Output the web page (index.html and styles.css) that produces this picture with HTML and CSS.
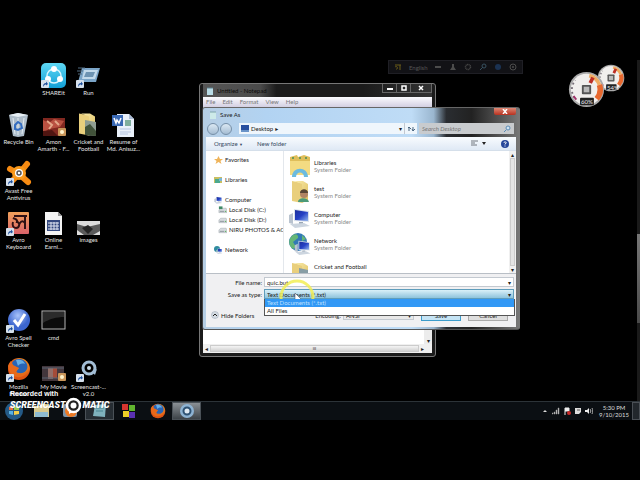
FILE: index.html
```html
<!DOCTYPE html>
<html lang="en">
<head>
    <meta charset="UTF-8">
    <meta name="viewport" content="width=device-width, initial-scale=1.0">
    <title>Save As - Desktop</title>
    <link rel="stylesheet" href="styles.css">
</head>
<body>
    <!-- shared shapes -->
    <svg class="defs" width="0" height="0" aria-hidden="true">
        <defs>
            <linearGradient id="gFolder" x1="0" y1="0" x2="1" y2="1"><stop offset="0" stop-color="#fbeeb0"/><stop offset="1" stop-color="#dcbb58"/></linearGradient>
            <linearGradient id="gShare" x1="0" y1="0" x2="0" y2="1"><stop offset="0" stop-color="#5fd9f5"/><stop offset="1" stop-color="#129fd6"/></linearGradient>
            <linearGradient id="gAvro" x1="0" y1="0" x2="0" y2="1"><stop offset="0" stop-color="#f0a05a"/><stop offset="1" stop-color="#d9626a"/></linearGradient>
            <radialGradient id="gSpell" cx=".45" cy=".3"><stop offset="0" stop-color="#a9c4fa"/><stop offset="1" stop-color="#3c66cf"/></radialGradient>
            <radialGradient id="gFire" cx=".6" cy=".35"><stop offset="0" stop-color="#ffc933"/><stop offset="1" stop-color="#dd5312"/></radialGradient>
            <linearGradient id="gScreen" x1="0" y1="0" x2="1" y2="1"><stop offset="0" stop-color="#1c2f9c"/><stop offset=".5" stop-color="#2440c4"/><stop offset="1" stop-color="#8fb4ee"/></linearGradient>
            <symbol id="shortcut" viewBox="0 0 8 8"><rect width="8" height="8" rx="1" fill="#d5e0ec"/><path d="M2 7C2 4 3 3 5 3V1.500L7 4 5 5.500V4.500C4 4.500 3 5 2 7Z" fill="#1d4f9c"/></symbol>
            <symbol id="folder" viewBox="0 0 20 24"><path d="M2 1L12 3V23L2 21Z" fill="#e9cf7c"/><path d="M4 1H13L18 4V20L12 23V4Z" fill="url(#gFolder)"/></symbol>
            <symbol id="computer" viewBox="0 0 24 20"><path d="M1 7L5 5V16L1 15Z" fill="#b9c3cf"/><path d="M6 1L21 3V14L6 13Z" fill="#dbe3ec"/><path d="M7 2L20 4V13L7 12Z" fill="url(#gScreen)"/><path d="M11 14H15V16H11Z" fill="#9aa7b5"/><path d="M2 16L16 15L22 18L7 20Z" fill="#ccd5df"/></symbol>
            <symbol id="fox" viewBox="0 0 24 24"><circle cx="12" cy="12" r="11" fill="url(#gFire)"/><path d="M5 6C7 1 17 0 20 7C22 13 17 17 12 16C7 16 10 12 12 11C9 11 5 10 5 6Z" fill="#2964b5"/><path d="M9 3C13 2 17 3 18 7C15 6 12 7 11 9Z" fill="#65aee5"/><path d="M1 9C2 6 3 5 4 4L6 8L12 11L9 15C11 18 17 18 20 14C18 22 3 24 1 9Z" fill="#e8691a"/></symbol>
            <symbol id="drive" viewBox="0 0 10 8"><path d="M1 4L3 2H9L10 4V7H1Z" fill="#d6dade" stroke="#98a0a8" stroke-width=".5"/><path d="M2 5.500H7" stroke="#8b939b"/><circle cx="8.500" cy="5.500" r=".7" fill="#4bb14b"/></symbol>
            <symbol id="dial" viewBox="0 0 40 40"><circle cx="20" cy="20" r="19" fill="#aaa"/><circle cx="20" cy="20" r="17" fill="#f1efed"/><path d="M7 29A15.500 15.500 0 0 1 8 10" fill="none" stroke="#776f78" stroke-width="2" stroke-dasharray="2 3"/><path d="M6 27L9 31" stroke="#a2306a" stroke-width="2"/><path d="M23 5A15.500 15.500 0 0 1 34 15" fill="none" stroke="#f0ac62" stroke-width="4"/><path d="M34 15A15.500 15.500 0 0 1 31 30" fill="none" stroke="#e8692f" stroke-width="6"/><path d="M27 7L24 13" stroke="#bd2f26" stroke-width="4"/><rect x="15" y="15" width="10" height="10" rx="1" fill="#555"/><rect x="17" y="17" width="6" height="6" fill="#b9b9b9"/><rect x="13" y="29" width="15" height="8" rx="1" fill="#222"/></symbol>
        </defs>
    </svg>

    <main class="screen">
        <div class="desktop">
            <div class="icons">
                <a class="icon c2 r1" href="#">
                    <svg width="27" height="27" viewBox="0 0 27 27"><rect x="1" y="1" width="25" height="25" rx="5" fill="url(#gShare)"/><circle cx="14" cy="14" r="7" fill="none" stroke="#d9f6ff" stroke-width="1.500"/><circle cx="14" cy="7" r="3" fill="#fff"/><circle cx="8" cy="17" r="3" fill="#fff"/><circle cx="20" cy="17" r="3" fill="#fff"/><use href="#shortcut" x="1" y="18" width="8" height="8"/></svg>
                    <span>SHAREit</span>
                </a>
                <a class="icon c3 r1" href="#">
                    <svg width="27" height="27" viewBox="0 0 27 27"><path d="M7 6H25L21 20H3Z" fill="#7ba5c8"/><path d="M9 8H23L20 17H7Z" fill="#c2d9ea"/><path d="M11 10H20L18 15H9Z" fill="#6d93b2"/><path d="M3 6H10M2 9H8M3 12H7" stroke="#526d82"/><use href="#shortcut" x="1" y="18" width="8" height="8"/></svg>
                    <span>Run</span>
                </a>
                <a class="icon c1 r2" href="#">
                    <svg width="27" height="27" viewBox="0 0 27 27"><path d="M4 4L13 2L23 4L19 25L13 26L8 25Z" fill="#aebdca"/><path d="M4 4L13 2L23 4L13 6Z" fill="#e8f0f5"/><path d="M8 7L10 23M13 7V24M19 7L17 23" stroke="#e4ecf2"/><path d="M10 14L13 11L16 13L17 17L13 19L10 18Z" fill="none" stroke="#346dc0" stroke-width="2"/></svg>
                    <span>Recycle Bin</span>
                </a>
                <a class="icon c2 r2" href="#">
                    <svg width="27" height="27" viewBox="0 0 27 27"><rect x="3" y="7" width="22" height="18" fill="#812820"/><path d="M3 9L9 12L14 8L24 10L20 16L9 18L3 22Z" fill="#b95141"/><path d="M7 10L12 14L9 18M15 10L19 14" stroke="#e3a789" stroke-width="2" fill="none"/><path d="M3 20L12 19L18 25H3Z" fill="#4f1511"/><rect x="18" y="17" width="8" height="8" rx="1" fill="#c9965a"/><circle cx="22" cy="21" r="2" fill="#fff3cc"/></svg>
                    <span>Amon Amarth - F...</span>
                </a>
                <a class="icon c3 r2" href="#">
                    <svg width="27" height="27" viewBox="0 0 27 27"><use href="#folder" x="2" y="1" width="20" height="25"/><path d="M10 9L21 11V25L10 24Z" fill="#8e9c91"/><path d="M10 16L15 13L21 20V25L10 24Z" fill="#41523a"/></svg>
                    <span>Cricket and Football</span>
                </a>
                <a class="icon c4 r2" href="#">
                    <svg width="27" height="27" viewBox="0 0 27 27"><path d="M7 3H19L24 8V26H7Z" fill="#e9f0fa"/><path d="M19 3V8H24Z" fill="#aabbd5"/><path d="M10 18H21M10 21H21M10 23H18" stroke="#b5c4df"/><rect x="2" y="4" width="11" height="11" fill="#3868b4"/><path d="M4 7L6 12L7 9L9 12L11 7" fill="none" stroke="#fff" stroke-width="1.500"/><rect x="15" y="9" width="6" height="6" fill="#7fae9d"/></svg>
                    <span>Resume of Md. Anisuz...</span>
                </a>
                <a class="icon c1 r3" href="#">
                    <svg width="27" height="27" viewBox="0 0 27 27"><path d="M14 14L22 4M14 14L5 9M14 14L23 22M14 14L7 21" stroke="#f78b12" stroke-width="6" stroke-linecap="round"/><circle cx="14" cy="13" r="7" fill="#f99a1c"/><circle cx="14" cy="13" r="4" fill="#fff"/><circle cx="14" cy="13" r="2" fill="none" stroke="#555" stroke-width="1.500"/><use href="#shortcut" x="1" y="18" width="8" height="8"/></svg>
                    <span>Avast Free Antivirus</span>
                </a>
                <a class="icon c1 r4" href="#">
                    <svg width="27" height="27" viewBox="0 0 27 27"><rect x="3" y="3" width="21" height="22" rx="1" fill="url(#gAvro)"/><path d="M9 7H22M20 7V20M8 9C10 10 13 10 12 13C15 13 15 19 11 19C8 19 7 16 8 13M14 16C16 11 18 12 20 14" fill="none" stroke="#2e1013" stroke-width="2"/><use href="#shortcut" x="1" y="19" width="8" height="8"/></svg>
                    <span>Avro Keyboard</span>
                </a>
                <a class="icon c2 r4" href="#">
                    <svg width="27" height="27" viewBox="0 0 27 27"><path d="M5 3H18L22 7V26H5Z" fill="#f4f4f4"/><path d="M18 3V7H22Z" fill="#999"/><rect x="7" y="11" width="13" height="11" fill="#34497f"/><path d="M8 14H19M8 17H19M8 20H19M11 13V21M14 13V21M17 13V21" stroke="#dfe5f2"/></svg>
                    <span>Online Earni...</span>
                </a>
                <a class="icon c3 r4" href="#">
                    <svg width="27" height="27" viewBox="0 0 27 27"><rect x="2" y="12" width="23" height="14" fill="#dcdcdc"/><path d="M2 15L12 18L25 15V22L18 26H9L2 21Z" fill="#5b5b5b"/><path d="M7 19L13 16L18 20L13 25Z" fill="#262626"/></svg>
                    <span>images</span>
                </a>
                <a class="icon c1 r6" href="#">
                    <svg width="27" height="27" viewBox="0 0 27 27"><circle cx="14" cy="13" r="11" fill="url(#gSpell)"/><path d="M9 13L13 18L20 7" fill="none" stroke="#fff" stroke-width="3"/><use href="#shortcut" x="1" y="18" width="8" height="8"/></svg>
                    <span>Avro Spell Checker</span>
                </a>
                <a class="icon c2 r6" href="#">
                    <svg width="27" height="27" viewBox="0 0 27 27"><rect x="2" y="4" width="23" height="18" fill="#0b0b0b" stroke="#b5b5b5"/><path d="M3 5H24V10C17 10 9 12 3 16Z" fill="#2b2b2b"/></svg>
                    <span>cmd</span>
                </a>
                <a class="icon c1 r7" href="#">
                    <svg width="27" height="27" viewBox="0 0 27 27"><use href="#fox" x="2" y="1" width="24" height="24"/><use href="#shortcut" x="1" y="18" width="8" height="8"/></svg>
                    <span>Mozilla Firefox</span>
                </a>
                <a class="icon c2 r7" href="#">
                    <svg width="27" height="27" viewBox="0 0 27 27"><rect x="2" y="10" width="22" height="15" fill="#42363c"/><rect x="8" y="12" width="5" height="11" fill="#916e68"/><rect x="13" y="12" width="4" height="10" fill="#a34b38"/><path d="M2 12H24M2 22H18" stroke="#596271"/><rect x="18" y="17" width="8" height="8" rx="1" fill="#c9965a"/><circle cx="22" cy="21" r="2" fill="#fff3cc"/></svg>
                    <span>My Movie</span>
                </a>
                <a class="icon c3 r7" href="#">
                    <svg width="27" height="27" viewBox="0 0 27 27"><circle cx="14" cy="12" r="6" fill="none" stroke="#a3bed6" stroke-width="3"/><circle cx="14" cy="12" r="2" fill="#c9dbe8"/><path d="M17 16L22 13L20 19Z" fill="#a3bed6"/><use href="#shortcut" x="1" y="18" width="8" height="8"/></svg>
                    <span>Screencast-... v2.0</span>
                </a>
            </div>

            <div class="langbar">
                <svg width="8" height="8" viewBox="0 0 8 8"><path d="M1 2H7M6 2V7M1 4C4 2 4 7 2 6" fill="none" stroke="#6b5d18"/></svg>
                <span>English</span>
                <svg width="8" height="8" viewBox="0 0 8 8"><rect x="1" y="3" width="6" height="2" fill="#4c4c4c"/></svg>
                <svg width="8" height="8" viewBox="0 0 8 8"><path d="M3 1H5V4L7 7H1L3 4Z" fill="#4c4c4c"/></svg>
                <svg width="8" height="8" viewBox="0 0 8 8"><circle cx="4" cy="4" r="2.500" fill="none" stroke="#444" stroke-dasharray="1 .5" stroke-width="1.500"/></svg>
                <svg width="8" height="8" viewBox="0 0 8 8"><circle cx="5" cy="3" r="2" fill="none" stroke="#37505f"/><path d="M4 4L1 7" stroke="#37505f"/></svg>
                <svg width="8" height="8" viewBox="0 0 8 8"><circle cx="4" cy="4" r="3" fill="#1b3252"/></svg>
                <svg width="8" height="8" viewBox="0 0 8 8"><circle cx="4" cy="4" r="3" fill="none" stroke="#4c4c4c"/><circle cx="4" cy="4" r="1" fill="#4c4c4c"/></svg>
            </div>

            <svg class="gauges" width="60" height="46" viewBox="0 0 60 46">
                <use href="#dial" x="30" y="0" width="28" height="28"/>
                <use href="#dial" x="1" y="7" width="37" height="37"/>
                <text x="14" y="40">60%</text>
                <text x="40" y="26">54%</text>
            </svg>

            <section class="window notepad" aria-label="Untitled - Notepad">
                <header class="titlebar">
                    <svg width="8" height="8" viewBox="0 0 8 8"><rect x="1" y="1" width="6" height="7" fill="#b9dce6"/><path d="M1 1H7" stroke="#5f7e8b"/></svg>
                    <h2>Untitled - Notepad</h2>
                    <div class="controls">
                        <button aria-label="Minimize"><svg width="8" height="6" viewBox="0 0 8 6"><path d="M1 4H7" stroke="#fff" stroke-width="2"/></svg></button>
                        <button aria-label="Maximize"><svg width="8" height="6" viewBox="0 0 8 6"><rect x="2" y="1" width="4" height="4" fill="none" stroke="#fff" stroke-width="1.500"/></svg></button>
                        <button class="wide" aria-label="Close"><svg width="8" height="6" viewBox="0 0 8 6"><path d="M2 1L6 5M6 1L2 5" stroke="#fff" stroke-width="1.500"/></svg></button>
                    </div>
                </header>
                <nav class="menu"><span>File</span><span>Edit</span><span>Format</span><span>View</span><span>Help</span></nav>
                <div class="page"><div class="vbar">▾</div></div>
                <div class="hbar"><span>◂</span><i>III</i><span>▸</span></div>
            </section>

            <form class="window dialog" aria-label="Save As" onsubmit="return false">
                <header class="titlebar">
                    <svg width="8" height="8" viewBox="0 0 8 8"><rect x="1" y="1" width="6" height="7" fill="#cdeae9"/><path d="M1 1H7" stroke="#7ea3ac"/></svg>
                    <h2>Save As</h2>
                    <button class="close" aria-label="Close"><svg width="8" height="5" viewBox="0 0 8 5"><path d="M2 0L6 5M6 0L2 5" stroke="#fff" stroke-width="1.500"/></svg></button>
                </header>
                <div class="address">
                    <button class="round" aria-label="Back"></button>
                    <button class="round" aria-label="Forward"></button>
                    <div class="path">
                        <svg width="8" height="7" viewBox="0 0 8 7"><rect width="8" height="6" fill="#2950a0"/><rect y="5" width="8" height="2" fill="#6a94c8"/></svg>
                        <span>Desktop</span><b>▸</b><em>▾</em>
                    </div>
                    <button class="refresh" aria-label="Refresh"><svg width="9" height="8" viewBox="0 0 9 8"><path d="M2 6V2M1 3L2 2L4 4M6 2V6M5 4L6 6L8 4" stroke="#4b6680" fill="none"/></svg></button>
                    <div class="search">
                        <input type="text" placeholder="Search Desktop" aria-label="Search Desktop">
                        <svg width="8" height="8" viewBox="0 0 8 8"><circle cx="5" cy="3" r="2" fill="#cfe3f3" stroke="#5a8bb5"/><path d="M3 5L1 7" stroke="#5a8bb5"/></svg>
                    </div>
                </div>
                <div class="toolbar">
                    <button>Organize <small>▼</small></button>
                    <button>New folder</button>
                    <button class="views" aria-label="Change your view"><svg width="16" height="7" viewBox="0 0 16 7"><path d="M0 1H7M0 3H4M0 5H6" stroke="#70777f"/><path d="M11 2H15L13 5Z" fill="#222"/></svg></button>
                    <button aria-label="Help"><svg width="8" height="8" viewBox="0 0 8 8"><circle cx="4" cy="4" r="4" fill="#27479a"/><path d="M3 3C3 1 6 2 5 3L4 4.500M4 5.500V6.500" stroke="#fff" fill="none"/></svg></button>
                </div>
                <div class="browser">
                    <ul class="tree">
                        <li><svg width="9" height="8" viewBox="0 0 9 8"><path d="M4.500 0L6 3H9L6.500 5L7.500 8L4.500 6L1.500 8L2.500 5L0 3H3Z" fill="#efb45a"/></svg>Favorites</li>
                        <li><svg width="9" height="8" viewBox="0 0 9 8"><rect y="1" width="8" height="6" fill="#c9bf62"/><rect x="1" y="3" width="5" height="4" fill="#4ba98e"/><rect x="5" y="2" width="3" height="3" fill="#7cb6d8"/></svg>Libraries</li>
                        <li><svg width="9" height="8"><use href="#computer" width="9" height="8"/></svg>Computer
                            <ul>
                                <li><svg width="9" height="8" viewBox="0 0 10 8"><use href="#drive" width="10" height="8"/><path d="M1 0H5V3H1Z" fill="#3f8a67"/></svg>Local Disk (C:)</li>
                                <li><svg width="9" height="8"><use href="#drive" width="9" height="8"/></svg>Local Disk (D:)</li>
                                <li><svg width="9" height="8"><use href="#drive" width="9" height="8"/></svg>NIRU PHOTOS &amp; AC</li>
                            </ul>
                        </li>
                        <li><svg width="9" height="8" viewBox="0 0 9 8"><circle cx="3" cy="3" r="3" fill="#2f8c9f"/><use href="#computer" x="2" y="2" width="7" height="6"/></svg>Network</li>
                    </ul>
                    <ul class="files">
                        <li>
                            <svg width="24" height="24" viewBox="0 0 24 24"><path d="M2 3L9 1L10 3L16 1L22 3V20H2Z" fill="#dfbe5a"/><path d="M2 7H22V21H2Z" fill="#f3db82"/><path d="M5 3V5M12 3V5M18 3V5" stroke="#6f9957" stroke-width="2"/><path d="M4 23C4 12 20 12 20 23H16C16 17 8 17 8 23Z" fill="#6cbbdf"/></svg>
                            <p>Libraries<small>System Folder</small></p>
                        </li>
                        <li>
                            <svg width="24" height="24" viewBox="0 0 24 24"><use href="#folder" x="2" y="0" width="20" height="24"/><path d="M10 22C10 17 20 17 21 22Z" fill="#4c9a78"/><circle cx="16" cy="14" r="4" fill="#b28463"/><path d="M12 13C12 8 20 8 20 13Z" fill="#5a4636"/></svg>
                            <p>test<small>System Folder</small></p>
                        </li>
                        <li>
                            <svg width="24" height="24"><use href="#computer" x="0" y="2" width="24" height="20"/></svg>
                            <p>Computer<small>System Folder</small></p>
                        </li>
                        <li>
                            <svg width="24" height="24" viewBox="0 0 24 24"><circle cx="10" cy="10" r="9" fill="#3279b5"/><path d="M3 5C7 0 11 3 10 6L5 10L8 15L5 17C1 14 0 9 3 5ZM14 3L18 7L14 9Z" fill="#65b777"/><use href="#computer" x="6" y="8" width="18" height="15"/></svg>
                            <p>Network<small>System Folder</small></p>
                        </li>
                        <li>
                            <svg width="24" height="24" viewBox="0 0 24 24"><use href="#folder" x="2" y="4" width="20" height="24"/><path d="M11 10L20 12V24H11Z" fill="#879da5"/></svg>
                            <p>Cricket and Football</p>
                        </li>
                    </ul>
                    <div class="scroll"><span>▴</span><i></i><span>▾</span></div>
                </div>
                <div class="fields">
                    <label for="fileName">File name:</label>
                    <div class="box"><input type="text" id="fileName" value="quic.but"><em>▾</em></div>
                    <label for="fileType">Save as type:</label>
                    <div class="box combo">
                        <select id="fileType"><option>Text Documents (*.txt)</option><option>All Files</option></select><em>▾</em>
                        <ul class="choices" role="listbox" aria-label="Save as type">
                            <li class="on" role="option" aria-selected="true">Text Documents (*.txt)</li>
                            <li role="option" aria-selected="false">All Files</li>
                        </ul>
                    </div>
                </div>
                <footer class="actions">
                    <button class="hide"><svg width="8" height="8" viewBox="0 0 8 8"><circle cx="4" cy="4" r="3.500" fill="#d5dce3" stroke="#98a4b0" stroke-width=".5"/><path d="M2 5L4 3L6 5" fill="none" stroke="#222"/></svg>Hide Folders</button>
                    <label for="encoding">Encoding:</label>
                    <div class="box enc"><select id="encoding"><option>ANSI</option></select><em>▾</em></div>
                    <button class="btn save">Save</button>
                    <button class="btn">Cancel</button>
                </footer>
            </form>

            <svg class="pointer" width="38" height="38" viewBox="0 0 38 38">
                <circle cx="19" cy="19" r="16" fill="none" stroke="#f2ee55" stroke-opacity=".85" stroke-width="3"/>
                <path d="M17 15V25L19 23L21 27L23 26L21 22H24Z" fill="#fff" stroke="#345" stroke-width=".5"/>
            </svg>
            <div class="edge"></div>
        </div>

        <footer class="taskbar">
            <button class="start" aria-label="Start"><svg width="20" height="18" viewBox="0 0 20 18"><circle cx="10" cy="9" r="9" fill="#245a87"/><path d="M5 5L9 4V8H5Z" fill="#e8703a"/><path d="M10 4L15 5V8H10Z" fill="#9bc84c"/><path d="M5 9H9V13L5 12Z" fill="#58b1e5"/><path d="M10 9H15V12L10 13Z" fill="#f3cf4b"/></svg></button>
            <button aria-label="Explorer"><svg width="18" height="16" viewBox="0 0 18 16"><path d="M1 3H8L9 1H16V14H1Z" fill="#d8c98d"/><path d="M2 9H15V14H2Z" fill="#8ebbd0"/></svg></button>
            <button aria-label="Media Player"><svg width="18" height="16" viewBox="0 0 18 16"><rect x="1" y="1" width="14" height="13" rx="2" fill="#7c93a9"/><circle cx="9" cy="8" r="6" fill="#ee7a24"/><path d="M7 5L12 8L7 11Z" fill="#fff"/></svg></button>
            <button class="open" aria-label="Notepad"><svg width="18" height="16" viewBox="0 0 18 16"><path d="M4 2L15 1L14 14L2 13Z" fill="#7fb2bd"/><path d="M5 5H13M5 8H12" stroke="#4b8490"/></svg></button>
            <button aria-label="Blocks"><svg width="16" height="16" viewBox="0 0 16 16"><rect x="1" y="1" width="6" height="6" fill="#d5352f"/><rect x="8" y="2" width="6" height="6" fill="#61b52f"/><rect x="2" y="8" width="6" height="6" fill="#edcf27"/><rect x="8" y="9" width="6" height="6" fill="#5a31b2"/></svg></button>
            <button aria-label="Firefox"><svg width="16" height="16"><use href="#fox" width="16" height="16"/></svg></button>
            <button class="open active" aria-label="Screencast"><svg width="16" height="16" viewBox="0 0 16 16"><circle cx="8" cy="8" r="7" fill="#8db3d3"/><circle cx="8" cy="8" r="3.500" fill="#dfeaf3" stroke="#2e5273" stroke-width="2"/></svg></button>
            <div class="tray">
                <svg width="8" height="8" viewBox="0 0 8 8"><path d="M2 5L4 3L6 5Z" fill="#ddd"/></svg>
                <svg width="8" height="8" viewBox="0 0 8 8"><path d="M0 7V6H1V7ZM2 7V5H3V7ZM4 7V3H5V7ZM6 7V1H7V7Z" fill="#ccc" stroke="#999" stroke-width=".5"/></svg>
                <svg width="8" height="8" viewBox="0 0 8 8"><path d="M2 1V8M2 1H6V4H2" fill="#eee" stroke="#eee"/><circle cx="6" cy="6" r="2" fill="#c92a2a"/></svg>
                <svg width="8" height="8" viewBox="0 0 8 8"><path d="M1 1H7V5L5 7H1Z" fill="#ddd"/><path d="M3 3H6" stroke="#555"/></svg>
                <svg width="8" height="8" viewBox="0 0 8 8"><path d="M0 3H2L4 1V7L2 5H0Z" fill="#eee"/><path d="M5 2C6 3 6 5 5 6M7 1C8 3 8 5 7 7" stroke="#aaa" fill="none"/></svg>
                <time>5:30 PM<br>9/10/2015</time>
            </div>
            <button class="peek" aria-label="Show desktop"></button>
        </footer>

        <div class="brand">
            <p>Recorded with</p>
            <strong>SCREENCAST<svg width="17" height="17" viewBox="0 0 17 17"><circle cx="8.500" cy="8.500" r="6.500" fill="#222" stroke="#fff" stroke-width="2.500"/><circle cx="8.500" cy="8.500" r="3" fill="#fff"/></svg>MATIC</strong>
        </div>
    </main>
</body>
</html>
```
FILE: styles.css
```css
:root {
    --text: #222;
    --muted: #8a8a8a;
    --line: #c3c9d0;
    --select: #3298f5;
}
* {
    box-sizing: border-box;
}
body {
    margin: 0;
    min-height: 100vh;
    display: grid;
    align-items: center;
    background-color: #000;
    font-family: Lato, "Liberation Sans", sans-serif;
    font-size: 6px;
    line-height: 7px;
    color: var(--text);
}
.defs {
    position: absolute;
}
svg {
    flex: none;
    display: block;
}
ul, p, h2 {
    margin: 0;
    padding: 0;
    list-style: none;
    font-size: 6px;
    font-weight: normal;
}
button, input, select {
    font: inherit;
    color: inherit;
    border: none;
    background: none;
    padding: 0;
    margin: 0;
    appearance: none;
    outline: none;
}
em, b, i {
    font-style: normal;
    font-weight: normal;
    font-family: "DejaVu Sans", sans-serif;
}
.screen {
    position: relative;
    width: 100%;
    aspect-ratio: 16 / 9;
    display: flex;
    flex-direction: column;
    overflow: hidden;
}
.desktop {
    flex: 1;
    min-height: 0;
    position: relative;
}

/* desktop icons */
.icons {
    display: grid;
    grid-template-columns: repeat(4, 35px);
    grid-template-rows: repeat(7, 49px);
    padding-top: 2px;
    padding-left: 1px;
}
.icon {
    display: flex;
    flex-direction: column;
    align-items: center;
    color: #e6e6e6;
    text-decoration: none;
    text-align: center;
}
.c1 { grid-column: 1; }
.c2 { grid-column: 2; }
.c3 { grid-column: 3; }
.c4 { grid-column: 4; }
.r1 { grid-row: 1; }
.r2 { grid-row: 2; }
.r3 { grid-row: 3; }
.r4 { grid-row: 4; }
.r6 { grid-row: 6; }
.r7 { grid-row: 7; }

/* gadgets */
.langbar {
    position: absolute;
    left: 388px;
    top: 0;
    width: 135px;
    height: 14px;
    display: flex;
    align-items: center;
    justify-content: space-between;
    padding: 0 5px;
    background-color: #121216;
    border: 1px solid #1f1f25;
    color: #555;
}
.gauges {
    position: absolute;
    right: 13px;
    top: 4px;
}
.gauges text {
    fill: #eee;
    font-size: 6px;
}

/* windows */
.window {
    position: absolute;
    display: flex;
    flex-direction: column;
    border: 1px solid #777;
    border-radius: 3px;
}
.titlebar {
    display: flex;
    align-items: center;
    gap: 3px;
    height: 13px;
    padding-left: 3px;
}
.notepad {
    left: 199px;
    top: 23px;
    width: 237px;
    height: 274px;
    padding: 0 3px 3px;
    background-color: #1b1b1b;
}
.notepad .titlebar {
    color: #0a0a0a;
    background: linear-gradient(90deg, #565656, #4a4a4a 25%, #1b1b1b 32%, #1b1b1b 70%, #333);
}
.controls {
    display: flex;
    margin-left: auto;
    align-self: flex-start;
    border: 1px solid #666;
    border-top: none;
}
.controls button {
    width: 14px;
    height: 8px;
    display: grid;
    place-items: center;
    border-right: 1px solid #666;
}
.controls .wide {
    width: 20px;
    border-right: none;
}
.menu {
    display: flex;
    gap: 7px;
    padding: 1px 3px;
    height: 10px;
    color: #777;
    background: linear-gradient(#fbfbfe, #d3cfe2);
}
.page {
    flex: 1;
    display: flex;
    justify-content: flex-end;
    background-color: #fff;
}
.vbar {
    width: 8px;
    display: flex;
    align-items: flex-end;
    justify-content: center;
    background-color: #ececec;
}
.hbar {
    display: flex;
    align-items: center;
    height: 9px;
    padding: 0 8px 0 2px;
    gap: 2px;
    background-color: #f0f0f0;
}
.hbar i {
    flex: 1;
    height: 7px;
    border: 1px solid #ccc;
    text-align: center;
    font-size: 4px;
    line-height: 5px;
    background: linear-gradient(#f4f4f4, #d2d2d2);
}
.dialog {
    left: 202px;
    top: 47px;
    width: 318px;
    height: 223px;
    padding: 0 3px 2px;
    border-color: #666 #777 #555 #444;
    background: linear-gradient(90deg, #b6cee4, #b2d3f2 20%, #bfdcf6 66%, #9ab6cf 73%, #2a2d31 77%, #222 85%, #777);
}
.close {
    width: 22px;
    height: 7px;
    margin-left: auto;
    align-self: flex-start;
    display: grid;
    place-items: center;
    border-radius: 0 0 2px 2px;
    background: linear-gradient(#dd8874, #b8301f);
}
.address {
    display: flex;
    align-items: center;
    height: 15px;
    padding-right: 2px;
}
.round {
    width: 12px;
    height: 12px;
    margin-left: 1px;
    border: 1px solid #7790a8;
    border-radius: 50%;
    background: linear-gradient(#dbe8f3, #a5bdd3);
}
.path {
    flex: 1;
    display: flex;
    align-items: center;
    gap: 2px;
    height: 11px;
    margin-left: 7px;
    padding: 0 2px;
    background-color: #eff6fc;
}
.path em {
    margin-left: auto;
}
.refresh {
    width: 13px;
    height: 11px;
    display: grid;
    place-items: center;
    border-left: 1px solid var(--line);
    background-color: #eff6fc;
}
.search {
    display: flex;
    align-items: center;
    width: 95px;
    height: 11px;
    margin-left: 2px;
    padding: 0 3px;
    background-color: #c8cbce;
}
.search input {
    flex: 1;
    min-width: 0;
}
.search input::placeholder {
    color: #777;
    font-style: italic;
}
.toolbar {
    display: flex;
    align-items: center;
    gap: 14px;
    height: 14px;
    margin-top: 1px;
    padding: 0 7px 0 8px;
    color: #34495f;
    border-bottom: 1px solid #d5dfea;
    background: linear-gradient(#f8fbfe, #dfe9f5);
}
.toolbar small {
    font-size: 4px;
}
.views {
    margin-left: auto;
}
.browser {
    display: flex;
    height: 122px;
    background-color: #fff;
}
.tree {
    flex: none;
    width: 78px;
    padding-top: 4px;
    overflow: hidden;
    white-space: nowrap;
    border-right: 1px solid #e3e7ec;
}
.tree li {
    padding-left: 19px;
    line-height: 10px;
    margin-bottom: 10px;
}
.tree svg {
    float: left;
    margin: 1px 0 0 -11px;
}
.tree ul li {
    margin: 0 0 0 -15px;
}
.files {
    flex: 1;
    overflow: hidden;
    padding: 3px 0 0 4px;
}
.files li {
    display: flex;
    gap: 2px;
    height: 26px;
}
.files p {
    padding-top: 5px;
}
.files small {
    display: block;
    font-size: 6px;
    color: var(--muted);
}
.scroll {
    width: 7px;
    display: flex;
    flex-direction: column;
    align-items: center;
    background-color: #f0f0f0;
}
.scroll i {
    width: 5px;
    flex: 1;
    border: 1px solid #ccc;
    background-color: #e4e4e4;
}
.fields {
    display: grid;
    grid-template-columns: 56px 1fr;
    align-items: center;
    gap: 2px;
    padding: 3px 2px 0 0;
    background-color: #f0f0f2;
    border-top: 1px solid #b9bfc6;
}
.fields label {
    text-align: right;
}
.box {
    position: relative;
    display: flex;
    align-items: center;
    height: 10px;
    padding: 0 2px;
    border: 1px solid var(--line);
    background-color: #fff;
}
.box input, .box select {
    flex: 1;
    min-width: 0;
}
.combo {
    border-color: #5f9dbb;
    background: linear-gradient(#d9f0f8, #8dc3dc);
}
.choices {
    position: absolute;
    z-index: 1;
    left: -1px;
    right: -2px;
    top: 9px;
    border: 1px solid #555;
    border-top: none;
    background-color: #fff;
}
.choices li {
    padding: 0 2px;
    line-height: 8px;
}
.choices .on {
    background-color: var(--select);
    color: #bfe0ff;
}
.actions {
    flex: 1;
    display: flex;
    align-items: center;
    padding: 4px 8px 0 5px;
    background-color: #f0f0f2;
}
.hide {
    display: flex;
    align-items: center;
    gap: 2px;
    margin-right: auto;
}
.enc {
    width: 71px;
    margin-left: 2px;
    background-color: #e8e8e8;
}
.btn {
    width: 40px;
    height: 11px;
    margin-left: 7px;
    border: 1px solid #aaa;
    background-color: #dedede;
}
.save {
    border-color: #3c9ccb;
    background-color: #c5e4f5;
}
.pointer {
    position: absolute;
    left: 278px;
    top: 218px;
}
/* strip of the next screen */
.edge {
    position: absolute;
    right: 0;
    top: 0;
    bottom: 0;
    width: 3px;
    background: linear-gradient(#1a1a1a 51%, #777 51%, #4a4a4a 77%, #1a1a1a 77%);
}

/* taskbar */
.taskbar {
    display: flex;
    align-items: center;
    height: 19px;
    padding-left: 1px;
    border-top: 1px solid #2c3338;
    background-color: #0b0f13;
}
.taskbar button {
    width: 29px;
    height: 18px;
    display: grid;
    place-items: center;
}
.taskbar .start {
    width: 26px;
}
.taskbar .open {
    border: 1px solid #4a5157;
    background-color: #262d33;
}
.taskbar .active {
    background: linear-gradient(#8a9095, #3d4348);
}
.tray {
    margin-left: auto;
    display: flex;
    align-items: center;
    gap: 3px;
}
.tray time {
    width: 36px;
    text-align: center;
    color: #ddd;
}
.taskbar .peek {
    width: 8px;
    border: 1px solid #4a4f55;
    background-color: #22272c;
}

/* recorder mark */
.brand {
    position: absolute;
    left: 10px;
    bottom: 7px;
    color: #fff;
}
.brand p {
    font: bold 7px/8px "Liberation Sans", sans-serif;
}
.brand strong {
    display: flex;
    align-items: center;
    height: 15px;
    font: italic 900 9px/15px Roboto, sans-serif;
}
```
